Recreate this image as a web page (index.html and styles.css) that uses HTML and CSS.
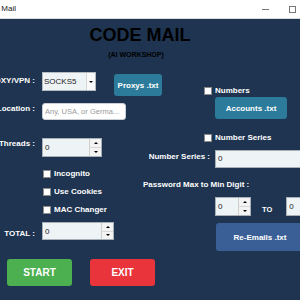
FILE: index.html
```html
<!DOCTYPE html>
<html lang="en">
<head>
  <meta charset="UTF-8">
  <title>Code Mail</title>
  <link rel="stylesheet" href="styles.css">
</head>
<body>
  <div class="window">
    <div class="titlebar">
      <span class="title">Code Mail</span>
      <div class="win-ctrls">
        <span class="min"></span>
        <span class="max"></span>
        <span class="close">✕</span>
      </div>
    </div>

    <div class="form">
      <h1 class="heading">CODE MAIL</h1>
      <p class="sub">(AI WORKSHOP)</p>

      <div class="cols">
        <div class="left">
          <div class="row">
            <label class="lbl lbl-proxy">PROXY/VPN :</label>
            <div class="select">
              <span class="select-val">SOCKS5</span>
              <span class="select-arrow"><i class="tri-down"></i></span>
            </div>
            <button class="btn teal btn-proxy">Proxys .txt</button>
          </div>

          <div class="row row-location">
            <label class="lbl lbl-near">Location :</label>
            <input class="text-in loc-in" type="text" placeholder="Any, USA, or Germa...">
          </div>

          <div class="row row-threads">
            <label class="lbl lbl-near">Threads :</label>
            <div class="spin spin-threads">
              <span class="spin-val">0</span>
              <span class="spin-btns"><span><i class="tri-up"></i></span><span><i class="tri-down"></i></span></span>
            </div>
          </div>

          <div class="check check-first"><span class="box"></span>Incognito</div>
          <div class="check"><span class="box"></span>Use Cookies</div>
          <div class="check"><span class="box"></span>MAC Changer</div>

          <div class="row row-total">
            <label class="lbl lbl-total">TOTAL :</label>
            <div class="spin spin-total">
              <span class="spin-val">0</span>
              <span class="spin-btns"><span><i class="tri-up"></i></span><span><i class="tri-down"></i></span></span>
            </div>
          </div>
        </div>

        <div class="right">
          <div class="check check-right"><span class="box"></span>Numbers</div>
          <button class="btn teal btn-accounts">Accounts .txt</button>
          <div class="check check-right check-series"><span class="box"></span>Number Series</div>

          <div class="row row-series">
            <label class="lbl lbl-series">Number Series :</label>
            <div class="field series-in">0</div>
          </div>

          <p class="pw-label">Password Max to Min Digit :</p>

          <div class="row row-range">
            <div class="spin spin-small">
              <span class="spin-val">0</span>
              <span class="spin-btns"><span><i class="tri-up"></i></span><span><i class="tri-down"></i></span></span>
            </div>
            <span class="to">TO</span>
            <div class="spin spin-small">
              <span class="spin-val">0</span>
              <span class="spin-btns"><span><i class="tri-up"></i></span><span><i class="tri-down"></i></span></span>
            </div>
          </div>

          <button class="btn steel btn-reemails">Re-Emails .txt</button>
        </div>
      </div>

      <div class="actions">
        <button class="btn big start">START</button>
        <button class="btn big exit">EXIT</button>
      </div>
    </div>
  </div>
</body>
</html>
```

FILE: styles.css
```css
* {
  box-sizing: border-box;
}
body {
  margin: 0;
  overflow: hidden;
  background: #1e3450;
  font-family: "Liberation Sans", Arial, sans-serif;
}
.window {
  width: 370px;
  height: 300px;
  margin-left: -40px;
  background: #1e3450;
}

/* title bar */
.titlebar {
  height: 19px;
  display: flex;
  align-items: center;
  padding: 0 7px 0 20px;
  background: #fff;
  border-bottom: 1px solid #dcdcdc;
}
.title {
  flex: 1;
  font-size: 8px;
  line-height: 10px;
  color: #222;
}
.win-ctrls {
  display: flex;
  align-items: center;
  gap: 20px;
}
.min {
  width: 7px;
  height: 1px;
  background: #777;
}
.max {
  width: 7px;
  height: 7px;
  border: 1px solid #777;
}
.close {
  width: 7px;
  font-size: 8px;
  line-height: 10px;
  color: #555;
}

/* heading */
.form {
  padding: 6px 10px 0 0;
}
.heading {
  margin: 0;
  font-size: 18px;
  line-height: 20px;
  font-weight: bold;
  text-align: center;
  color: #000;
}
.sub {
  margin: 6px 8px 0 0;
  font-size: 7px;
  line-height: 8px;
  font-weight: bold;
  text-align: center;
  color: #000;
}

.cols {
  display: flex;
  margin-top: 13px;
}
.left {
  width: 180px;
  flex: none;
}
.right {
  flex: 1;
  padding-top: 14px;
}

.row {
  display: flex;
  align-items: flex-start;
}
.row > * {
  flex: none;
}
.lbl {
  width: 75px;
  display: flex;
  justify-content: flex-end;
  margin-right: 7px;
  white-space: nowrap;
  font-size: 8px;
  line-height: 10px;
  font-weight: bold;
  color: #fff;
}
.lbl-proxy {
  margin-top: 4px;
}
.lbl-near {
  margin-top: 1px;
}
.lbl-total {
  margin-top: 7px;
}

/* inputs */
.select {
  width: 54px;
  height: 19px;
  display: flex;
  background: #eef3f6;
  border: 1px solid #b4bcc2;
}
.select-val {
  flex: 1;
  padding-left: 1px;
  font-size: 8px;
  line-height: 17px;
  color: #222;
}
.select-arrow {
  width: 9px;
  display: flex;
  align-items: center;
  justify-content: center;
  background: #fafafa;
  border-left: 1px solid #d6d6d6;
}
.tri-down {
  width: 0;
  height: 0;
  border-left: 2px solid transparent;
  border-right: 2px solid transparent;
  border-top: 2px solid #000;
}
.tri-up {
  width: 0;
  height: 0;
  border-left: 2px solid transparent;
  border-right: 2px solid transparent;
  border-bottom: 2px solid #000;
}

.row-location {
  margin-top: 7px;
}
.text-in {
  margin: 0;
  padding: 0 2px;
  font-family: inherit;
  font-size: 7.5px;
  color: #222;
  background: #fff;
  border: 1px solid #c9cfd4;
  border-radius: 3px;
  outline: none;
}
.text-in::placeholder {
  color: #9a9a9a;
}
.loc-in {
  width: 84px;
  height: 17px;
}

.spin {
  display: flex;
  background: #eef3f6;
  border: 1px solid #a7b0b6;
}
.spin-val {
  flex: 1;
  padding-left: 2px;
  font-size: 8px;
  color: #222;
  display: flex;
  align-items: center;
}
.spin-btns {
  width: 12px;
  display: flex;
  flex-direction: column;
  border-left: 1px solid #cfcfcf;
}
.spin-btns span {
  flex: 1;
  display: flex;
  align-items: center;
  justify-content: center;
  background: #f3f3f3;
}
.spin-btns span + span {
  border-top: 1px solid #d8d8d8;
}
.row-threads {
  margin-top: 18px;
}
.spin-threads {
  width: 60px;
  height: 19px;
}
.row-total {
  margin-top: 7px;
}
.spin-total {
  width: 72px;
  height: 18px;
}

/* checkboxes */
.check {
  height: 10px;
  display: flex;
  align-items: center;
  gap: 3px;
  margin: 8px 0 0 83px;
  font-size: 8px;
  line-height: 10px;
  font-weight: bold;
  color: #fff;
  white-space: nowrap;
}
.check-first {
  margin-top: 12px;
}
.box {
  width: 8px;
  height: 8px;
  background: #fff;
  border: 1px solid #8a8a8a;
}
.check-right {
  margin: 0 0 0 64px;
}
.check-series {
  margin-top: 14px;
}

/* buttons */
.btn {
  display: block;
  margin: 0;
  padding: 0;
  border: none;
  border-radius: 3px;
  font-family: inherit;
  font-size: 8px;
  font-weight: bold;
  color: #fff;
  white-space: nowrap;
  cursor: pointer;
}
.teal {
  background: #2c7b9b;
}
.steel {
  background: #3a5f97;
}
.btn-proxy {
  width: 48px;
  height: 22px;
  margin: 2px 0 0 18px;
}
.btn-accounts {
  width: 72px;
  height: 22px;
  margin: 1px 0 0 75px;
}
.btn-reemails {
  width: 88px;
  height: 28px;
  margin: 7px 0 0 76px;
}

/* right column rows */
.row-series {
  margin-top: 7px;
}
.lbl-series {
  width: 70px;
  margin: 2px 5px 0 0;
}
.field {
  height: 18px;
  padding-left: 2px;
  font-size: 8px;
  line-height: 16px;
  color: #222;
  background: #eef3f6;
  border: 1px solid #a7b0b6;
}
.series-in {
  width: 110px;
}
.pw-label {
  margin: 12px 0 0 3px;
  font-size: 8px;
  line-height: 10px;
  font-weight: bold;
  color: #fff;
  white-space: nowrap;
}
.row-range {
  margin: 7px 0 0 75px;
}
.spin-small {
  width: 36px;
  height: 19px;
}
.to {
  margin: 8px 14px 0 11px;
  font-size: 7.5px;
  line-height: 10px;
  font-weight: bold;
  color: #fff;
}

/* bottom actions */
.actions {
  display: flex;
  gap: 18px;
  margin: 8px 0 0 47px;
}
.big {
  width: 65px;
  height: 27px;
  font-size: 10px;
}
.start {
  background: #4caf50;
}
.exit {
  background: #e8343a;
}
```
